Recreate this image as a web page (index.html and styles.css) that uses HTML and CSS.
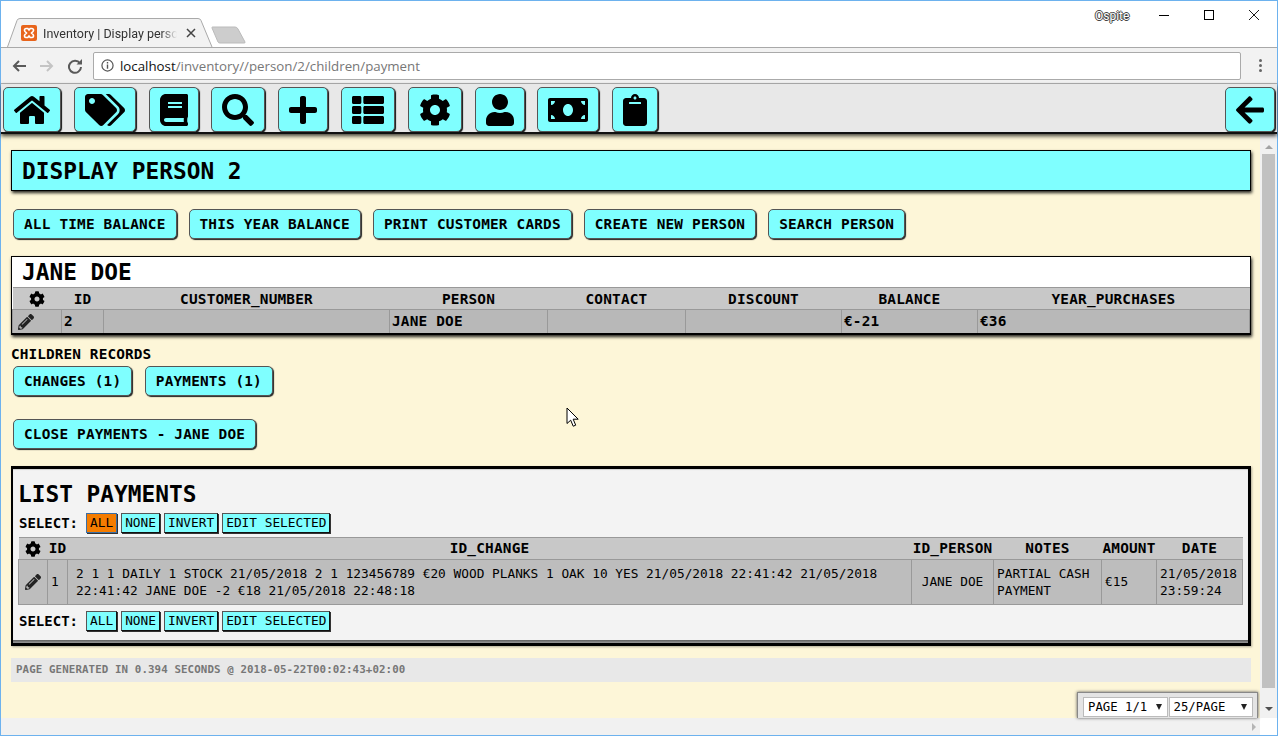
FILE: index.html
```html
<!DOCTYPE html>
<html lang="en">
<head>
    <meta charset="UTF-8">
    <title>Inventory | Display person 2</title>
    <link rel="stylesheet" href="styles.css">
</head>
<body>
    <svg class="sprite" xmlns="http://www.w3.org/2000/svg">
        <symbol id="i-home" viewBox="0 0 576 512"><path d="M280.37 148.26L96 300.11V464a16 16 0 0 0 16 16l112.06-.29a16 16 0 0 0 15.92-16V368a16 16 0 0 1 16-16h64a16 16 0 0 1 16 16v95.64a16 16 0 0 0 16 16.05L464 480a16 16 0 0 0 16-16V300L295.67 148.26a12.19 12.19 0 0 0-15.3 0zM571.6 251.47L488 182.56V44.05a12 12 0 0 0-12-12h-56a12 12 0 0 0-12 12v72.61L318.47 43a48 48 0 0 0-61 0L4.34 251.47a12 12 0 0 0-1.6 16.9l25.5 31A12 12 0 0 0 45.15 301l235.22-193.74a12.19 12.19 0 0 1 15.3 0L530.9 301a12 12 0 0 0 16.9-1.6l25.5-31a12 12 0 0 0-1.7-16.93z"/></symbol>
        <symbol id="i-tags" viewBox="0 0 640 512"><path d="M497.941 225.941L286.059 14.059A48 48 0 0 0 252.118 0H48C21.49 0 0 21.49 0 48v204.118a48 48 0 0 0 14.059 33.941l211.882 211.882c18.744 18.745 49.136 18.746 67.882 0l204.118-204.118c18.745-18.745 18.745-49.137 0-67.882zM112 160c-26.51 0-48-21.49-48-48s21.49-48 48-48 48 21.49 48 48-21.49 48-48 48zm513.941 133.823L421.823 497.941c-18.745 18.745-49.137 18.745-67.882 0l-.36-.36L527.64 323.522c16.999-16.999 26.36-39.6 26.36-63.64s-9.362-46.641-26.36-63.64L331.397 0h48.721a48 48 0 0 1 33.941 14.059l211.882 211.882c18.745 18.745 18.745 49.137 0 67.882z"/></symbol>
        <symbol id="i-book" viewBox="0 0 448 512"><path d="M448 360V24c0-13.3-10.7-24-24-24H96C43 0 0 43 0 96v320c0 53 43 96 96 96h328c13.3 0 24-10.7 24-24v-16c0-7.5-3.5-14.3-8.9-18.7-4.2-15.4-4.2-59.3 0-74.7 5.4-4.3 8.9-11.1 8.9-18.6zM128 134c0-3.3 2.7-6 6-6h212c3.3 0 6 2.7 6 6v20c0 3.3-2.7 6-6 6H134c-3.3 0-6-2.7-6-6v-20zm0 64c0-3.3 2.7-6 6-6h212c3.3 0 6 2.7 6 6v20c0 3.3-2.7 6-6 6H134c-3.3 0-6-2.7-6-6v-20zm253.4 250H96c-17.7 0-32-14.3-32-32 0-17.6 14.4-32 32-32h285.4c-1.9 17.1-1.9 46.9 0 64z"/></symbol>
        <symbol id="i-search" viewBox="0 0 512 512"><path d="M505 442.7L405.3 343c-4.5-4.5-10.6-7-17-7H372c27.6-35.3 44-79.7 44-128C416 93.1 322.9 0 208 0S0 93.1 0 208s93.1 208 208 208c48.3 0 92.7-16.4 128-44v16.3c0 6.4 2.5 12.5 7 17l99.7 99.7c9.4 9.4 24.6 9.4 33.9 0l28.3-28.3c9.4-9.4 9.4-24.6.1-34zM208 336c-70.7 0-128-57.2-128-128 0-70.7 57.2-128 128-128 70.7 0 128 57.2 128 128 0 70.7-57.2 128-128 128z"/></symbol>
        <symbol id="i-plus" viewBox="0 0 448 512"><path d="M416 208H272V64c0-17.67-14.33-32-32-32h-32c-17.67 0-32 14.33-32 32v144H32c-17.67 0-32 14.33-32 32v32c0 17.67 14.33 32 32 32h144v144c0 17.67 14.33 32 32 32h32c17.67 0 32-14.33 32-32V304h144c17.67 0 32-14.33 32-32v-32c0-17.67-14.33-32-32-32z"/></symbol>
        <symbol id="i-list" viewBox="0 0 512 512"><path d="M149.333 216v80c0 13.255-10.745 24-24 24H24c-13.255 0-24-10.745-24-24v-80c0-13.255 10.745-24 24-24h101.333c13.255 0 24 10.745 24 24zM0 376v80c0 13.255 10.745 24 24 24h101.333c13.255 0 24-10.745 24-24v-80c0-13.255-10.745-24-24-24H24c-13.255 0-24 10.745-24 24zM125.333 32H24C10.745 32 0 42.745 0 56v80c0 13.255 10.745 24 24 24h101.333c13.255 0 24-10.745 24-24V56c0-13.255-10.745-24-24-24zm80 448H488c13.255 0 24-10.745 24-24v-80c0-13.255-10.745-24-24-24H205.333c-13.255 0-24 10.745-24 24v80c0 13.255 10.745 24 24 24zm-24-424v80c0 13.255 10.745 24 24 24H488c13.255 0 24-10.745 24-24V56c0-13.255-10.745-24-24-24H205.333c-13.255 0-24 10.745-24 24zm24 264H488c13.255 0 24-10.745 24-24v-80c0-13.255-10.745-24-24-24H205.333c-13.255 0-24 10.745-24 24v80c0 13.255 10.745 24 24 24z"/></symbol>
        <symbol id="i-cog" viewBox="0 0 512 512"><path d="M487.4 315.7l-42.6-24.6c4.3-23.2 4.3-47 0-70.2l42.6-24.6c4.9-2.8 7.1-8.6 5.5-14-11.1-35.6-30-67.8-54.7-94.6-3.8-4.1-10-5.1-14.8-2.3L380.8 110c-17.9-15.4-38.5-27.3-60.8-35.1V25.8c0-5.6-3.9-10.5-9.4-11.7-36.7-8.2-74.3-7.8-109.2 0-5.5 1.2-9.4 6.1-9.4 11.7V75c-22.2 7.9-42.8 19.8-60.8 35.1L88.7 85.5c-4.9-2.8-11-1.9-14.8 2.3-24.7 26.7-43.6 58.9-54.7 94.6-1.7 5.4.6 11.2 5.5 14L67.3 221c-4.3 23.2-4.3 47 0 70.2l-42.6 24.6c-4.9 2.8-7.1 8.6-5.5 14 11.1 35.6 30 67.8 54.7 94.6 3.8 4.1 10 5.1 14.8 2.3l42.6-24.6c17.9 15.4 38.5 27.3 60.8 35.1v49.2c0 5.6 3.9 10.5 9.4 11.7 36.7 8.2 74.3 7.8 109.2 0 5.5-1.2 9.4-6.1 9.4-11.7v-49.2c22.2-7.9 42.8-19.8 60.8-35.1l42.6 24.6c4.9 2.8 11 1.9 14.8-2.3 24.7-26.7 43.6-58.9 54.7-94.6 1.5-5.5-.7-11.3-5.6-14.1zM256 336c-44.1 0-80-35.9-80-80s35.9-80 80-80 80 35.9 80 80-35.9 80-80 80z"/></symbol>
        <symbol id="i-user" viewBox="0 0 448 512"><path d="M224 256c70.7 0 128-57.3 128-128S294.7 0 224 0 96 57.3 96 128s57.3 128 128 128zm89.6 32h-16.7c-22.2 10.2-46.9 16-72.9 16s-50.6-5.8-72.9-16h-16.7C60.2 288 0 348.2 0 422.4V464c0 26.5 21.5 48 48 48h352c26.5 0 48-21.5 48-48v-41.6c0-74.2-60.2-134.4-134.4-134.4z"/></symbol>
        <symbol id="i-money" viewBox="0 0 640 512"><path d="M608 64H32C14.33 64 0 78.33 0 96v320c0 17.67 14.33 32 32 32h576c17.67 0 32-14.33 32-32V96c0-17.67-14.33-32-32-32zM48 400v-64c35.35 0 64 28.65 64 64H48zm0-224v-64h64c0 35.35-28.65 64-64 64zm272 176c-44.19 0-80-42.99-80-96 0-53.02 35.82-96 80-96s80 42.98 80 96c0 53.03-35.83 96-80 96zm272 48h-64c0-35.35 28.65-64 64-64v64zm0-224c-35.35 0-64-28.65-64-64h64v64z"/></symbol>
        <symbol id="i-clip" viewBox="0 0 384 512"><path d="M384 112v352c0 26.51-21.49 48-48 48H48c-26.51 0-48-21.49-48-48V112c0-26.51 21.49-48 48-48h80c0-35.29 28.71-64 64-64s64 28.71 64 64h80c26.51 0 48 21.49 48 48zM192 40c-13.255 0-24 10.745-24 24s10.745 24 24 24 24-10.745 24-24-10.745-24-24-24m96 114v-20a6 6 0 0 0-6-6H102a6 6 0 0 0-6 6v20a6 6 0 0 0 6 6h180a6 6 0 0 0 6-6z"/></symbol>
        <symbol id="i-back" viewBox="0 0 448 512"><path d="M257.5 445.1l-22.2 22.2c-9.4 9.4-24.6 9.4-33.9 0L7 273c-9.4-9.4-9.4-24.6 0-33.9L201.4 44.7c9.4-9.4 24.6-9.4 33.9 0l22.2 22.2c9.5 9.5 9.3 25-.4 34.3L136.6 216H424c13.3 0 24 10.7 24 24v32c0 13.3-10.7 24-24 24H136.6l120.5 114.8c9.8 9.3 10 24.8.4 34.3z"/></symbol>
        <symbol id="i-pencil" viewBox="0 0 512 512"><path d="M497.9 142.1l-46.1 46.1c-4.7 4.7-12.3 4.7-17 0l-111-111c-4.7-4.7-4.7-12.3 0-17l46.1-46.1c18.7-18.7 49.1-18.7 67.9 0l60.1 60.1c18.8 18.7 18.8 49.1 0 67.9zM284.2 99.8L21.6 362.4.4 483.9c-2.9 16.4 11.4 30.6 27.8 27.8l121.5-21.3 262.6-262.6c4.7-4.7 4.7-12.3 0-17l-111-111c-4.8-4.7-12.4-4.7-17.1 0zM124.1 339.9c-5.5-5.5-5.5-14.3 0-19.8l154-154c5.5-5.5 14.3-5.5 19.8 0s5.5 14.3 0 19.8l-154 154c-5.5 5.5-14.3 5.5-19.8 0zM88 424h48v36.3l-64.5 11.3-31.1-31.1L51.7 376H88v48z"/></symbol>
    </svg>

    <div class="window">
        <div class="titlebar">
            <div class="tab">
                <svg class="tab-shape" viewBox="0 0 208 29"><path d="M0.5 29 L10 2.5 Q10.7 0.5 13 0.5 H191 Q193.3 0.5 194 2.5 L205 29" fill="#f2f2f2" stroke="#a9a9a9"/></svg>
                <svg class="favicon" viewBox="0 0 16 16"><rect width="16" height="16" rx="2" fill="#e8641b"/><path d="M5 3.5h1.800L8 5l1.200-1.500H11c1.500 0 2 1.800 1 3L10.500 8l1.500 1.500c1 1.200.5 3-1 3H9.200L8 11l-1.200 1.500H5c-1.500 0-2-1.800-1-3L5.500 8 4 6.500c-1-1.200-.5-3 1-3z" fill="none" stroke="#fff" stroke-width="1.600"/></svg>
                <span class="tab-title">Inventory | Display person</span>
                <svg class="tab-close" viewBox="0 0 10 10"><path d="M1 1l8 8M9 1l-8 8" stroke="#444" stroke-width="1.5"/></svg>
            </div>
            <svg class="newtab" viewBox="0 0 35 18"><path d="M1.5 1 H24 Q26 1 27 3 L34 16 Q34.5 17 33 17 H9 Q7.500 17 7 16 L1 2 Q0.700 1 1.500 1z" fill="#cdcdcd" stroke="#bbb"/></svg>
            <span class="user-name">Ospite</span>
            <div class="win-controls">
                <svg class="win-btn" viewBox="0 0 10 10"><path d="M0 5.5h10" stroke="#000"/></svg>
                <svg class="win-btn" viewBox="0 0 10 10"><rect x="0.5" y="0.5" width="9" height="9" fill="none" stroke="#000"/></svg>
                <svg class="win-btn" viewBox="0 0 10 10"><path d="M0 0l10 10M10 0L0 10" stroke="#000" stroke-width="0.9"/></svg>
            </div>
        </div>

        <div class="toolbar">
            <svg class="tool-icon" viewBox="0 0 16 16"><path d="M15 8H3M8 3L3 8l5 5" fill="none" stroke="#5a5a5a" stroke-width="2"/></svg>
            <svg class="tool-icon" viewBox="0 0 16 16"><path d="M1 8h12M8 3l5 5-5 5" fill="none" stroke="#c4c4c4" stroke-width="2"/></svg>
            <svg class="tool-icon" viewBox="0 0 16 16"><path d="M13 5.500A6 6 0 1 0 14 9" fill="none" stroke="#5a5a5a" stroke-width="2"/><path d="M9.500 6.500H15V1z" fill="#5a5a5a"/></svg>
            <div class="address">
                <svg class="info" viewBox="0 0 14 14"><circle cx="7" cy="7" r="6" fill="none" stroke="#555" stroke-width="1.300"/><path d="M7 6v4.500M7 3.300v1.500" stroke="#555" stroke-width="1.500"/></svg>
                <span class="url"><span class="host">localhost</span>/inventory//person/2/children/payment</span>
            </div>
            <span class="kebab"><i></i><i></i><i></i></span>
        </div>

        <nav class="navbar">
            <a class="nav-btn"><svg class="w36"><use href="#i-home"/></svg></a>
            <a class="nav-btn"><svg class="w40"><use href="#i-tags"/></svg></a>
            <a class="nav-btn"><svg class="w28"><use href="#i-book"/></svg></a>
            <a class="nav-btn"><svg class="w32"><use href="#i-search"/></svg></a>
            <a class="nav-btn"><svg class="w28"><use href="#i-plus"/></svg></a>
            <a class="nav-btn"><svg class="w32"><use href="#i-list"/></svg></a>
            <a class="nav-btn"><svg class="w32"><use href="#i-cog"/></svg></a>
            <a class="nav-btn"><svg class="w28"><use href="#i-user"/></svg></a>
            <a class="nav-btn"><svg class="w40"><use href="#i-money"/></svg></a>
            <a class="nav-btn"><svg class="w24"><use href="#i-clip"/></svg></a>
            <a class="nav-btn nav-back"><svg class="w28"><use href="#i-back"/></svg></a>
        </nav>

        <div class="viewport">
            <main class="content">
                <h1 class="page-title">DISPLAY PERSON 2</h1>

                <div class="btn-row">
                    <a class="btn">ALL TIME BALANCE</a>
                    <a class="btn">THIS YEAR BALANCE</a>
                    <a class="btn">PRINT CUSTOMER CARDS</a>
                    <a class="btn">CREATE NEW PERSON</a>
                    <a class="btn">SEARCH PERSON</a>
                </div>

                <section class="record">
                    <h2 class="record-name">JANE DOE</h2>
                    <table class="grid grid-person">
                        <colgroup>
                            <col class="p1"><col class="p2"><col class="p3"><col class="p4"><col class="p5"><col class="p6"><col class="p7"><col>
                        </colgroup>
                        <thead>
                            <tr>
                                <th><svg class="cell-icon"><use href="#i-cog"/></svg></th>
                                <th>ID</th><th>CUSTOMER_NUMBER</th><th>PERSON</th><th>CONTACT</th><th>DISCOUNT</th><th>BALANCE</th><th>YEAR_PURCHASES</th>
                            </tr>
                        </thead>
                        <tbody>
                            <tr>
                                <td class="edit-cell"><svg class="cell-icon pencil"><use href="#i-pencil"/></svg></td>
                                <td>2</td><td></td><td>JANE DOE</td><td></td><td></td><td>€-21</td><td>€36</td>
                            </tr>
                        </tbody>
                    </table>
                </section>

                <div class="children-label">CHILDREN RECORDS</div>
                <div class="btn-row btn-row-children">
                    <a class="btn">CHANGES (1)</a>
                    <a class="btn">PAYMENTS (1)</a>
                </div>
                <div class="btn-row">
                    <a class="btn">CLOSE PAYMENTS - JANE DOE</a>
                </div>

                <section class="list-box">
                    <div class="list-inner">
                        <h2 class="list-title">LIST PAYMENTS</h2>
                        <div class="select-row">
                            <b>SELECT:</b>
                            <a class="mini active">ALL</a><a class="mini">NONE</a><a class="mini">INVERT</a><a class="mini">EDIT SELECTED</a>
                        </div>
                        <table class="grid grid-list">
                            <colgroup>
                                <col class="l1"><col class="l2"><col><col class="l4"><col class="l5"><col class="l6"><col class="l7">
                            </colgroup>
                            <thead>
                                <tr>
                                    <th><svg class="cell-icon"><use href="#i-cog"/></svg></th>
                                    <th>ID</th><th>ID_CHANGE</th><th>ID_PERSON</th><th>NOTES</th><th>AMOUNT</th><th>DATE</th>
                                </tr>
                            </thead>
                            <tbody>
                                <tr>
                                    <td class="center"><svg class="cell-icon pencil"><use href="#i-pencil"/></svg></td>
                                    <td>1</td>
                                    <td class="pad">2 1 1 DAILY 1 STOCK 21/05/2018 2 1 123456789 €20 WOOD PLANKS 1 OAK 10 YES 21/05/2018 22:41:42 21/05/2018 22:41:42 JANE DOE -2 €18 21/05/2018 22:48:18</td>
                                    <td class="center">JANE DOE</td>
                                    <td>PARTIAL CASH PAYMENT</td>
                                    <td>€15</td>
                                    <td>21/05/2018 23:59:24</td>
                                </tr>
                            </tbody>
                        </table>
                        <div class="select-row select-row-bottom">
                            <b>SELECT:</b>
                            <a class="mini">ALL</a><a class="mini">NONE</a><a class="mini">INVERT</a><a class="mini">EDIT SELECTED</a>
                        </div>
                    </div>
                </section>

                <footer class="page-footer">PAGE GENERATED IN 0.394 SECONDS @ 2018-05-22T00:02:43+02:00</footer>
            </main>

            <div class="pager">
                <span class="pager-box">PAGE 1/1<i class="caret"></i></span>
                <span class="pager-box">25/PAGE<i class="caret"></i></span>
            </div>

            <svg class="cursor" viewBox="0 0 14 21"><path d="M1 1v15.500l3.700-3.300 2.500 6 2.500-1-2.500-6h5z" fill="#fff" stroke="#000"/></svg>

            <div class="vscroll">
                <span class="arrow-up"></span>
                <div class="thumb"></div>
                <span class="arrow-down"></span>
            </div>
        </div>

        <div class="hscroll">
            <div class="htrack"><span class="arrow-right"></span></div>
            <div class="corner"></div>
        </div>
    </div>
</body>
</html>
```

FILE: styles.css
```css
* {
    box-sizing: border-box;
}

html, body {
    margin: 0;
    height: 736px;
    overflow: hidden;
}

body {
    font-family: "DejaVu Sans Mono", "Liberation Mono", monospace;
    font-size: 14.4px;
    color: #000;
    background: #fff;
}

.sprite {
    position: absolute;
    width: 0;
    height: 0;
}

.window {
    height: 736px;
    display: flex;
    flex-direction: column;
    border: 1px solid #6db2ee;
}

/* browser chrome */
.titlebar {
    height: 46px;
    flex: none;
    display: flex;
    align-items: flex-end;
    background: #fff;
    position: relative;
}

.tab {
    width: 205px;
    height: 29px;
    margin-left: 6px;
    padding: 1px 16px 0 14px;
    display: flex;
    align-items: center;
    gap: 6px;
    position: relative;
    font-family: Roboto, sans-serif;
    font-size: 12.5px;
    color: #333;
}

.tab-shape {
    position: absolute;
    left: 0;
    top: 0;
    width: 208px;
    height: 29px;
}

.favicon {
    width: 16px;
    height: 16px;
    position: relative;
    flex: none;
}

.tab-title {
    width: 134px;
    flex: none;
    white-space: nowrap;
    position: relative;
    -webkit-mask-image: linear-gradient(to right, #000 88%, transparent);
    mask-image: linear-gradient(to right, #000 88%, transparent);
}

.tab-close {
    width: 10px;
    height: 10px;
    margin-left: auto;
    position: relative;
    flex: none;
}

.newtab {
    width: 35px;
    height: 18px;
    margin: 0 0 3px -1px;
    flex: none;
}

.user-name {
    position: absolute;
    left: 1094px;
    top: 8px;
    font-family: Roboto, sans-serif;
    font-size: 12px;
    color: #fff;
    text-shadow: 1px 0 0 #444, -1px 0 0 #444, 0 1px 0 #444, 0 -1px 0 #444;
}

.win-controls {
    position: absolute;
    right: 18px;
    top: 9px;
    display: flex;
    gap: 35px;
}

.win-btn {
    width: 10px;
    height: 10px;
}

.toolbar {
    height: 37px;
    flex: none;
    display: flex;
    align-items: center;
    background: #f2f2f2;
    border-top: 1px solid #a9a9a9;
    border-bottom: 1px solid #b5b5b5;
    padding-left: 10px;
}

.tool-icon {
    width: 16px;
    height: 16px;
    margin-right: 12px;
    flex: none;
}

.address {
    width: 1148px;
    height: 28px;
    margin-left: -2px;
    padding-left: 7px;
    display: flex;
    align-items: center;
    gap: 6px;
    background: #fff;
    border: 1px solid #aaa;
    border-radius: 2px;
}

.info {
    width: 13px;
    height: 13px;
}

.url {
    font-family: "Open Sans", sans-serif;
    font-size: 13.3px;
    color: #777;
}

.host {
    color: #111;
}

.kebab {
    margin-left: 18px;
    display: flex;
    flex-direction: column;
    gap: 2px;
}

.kebab i {
    width: 3px;
    height: 3px;
    background: #666;
    border-radius: 50%;
}

/* icon bar */
.navbar {
    height: 50px;
    flex: none;
    display: flex;
    gap: 12.8px;
    padding: 3px 2px 0;
    background: #e8e8e8;
    border-bottom: 2px solid #111;
    box-shadow: 0 2px 4px rgba(0, 0, 0, 0.75);
    position: relative;
    z-index: 2;
}

.nav-btn {
    height: 45px;
    padding: 0 10px;
    display: flex;
    align-items: center;
    background: #7fffff;
    border: 1px solid #555;
    border-radius: 5px;
    box-shadow: 1px 1px 1px #111;
}

.nav-back {
    margin-left: auto;
}

.nav-btn svg {
    height: 32px;
}

.w24 { width: 24px; }
.w28 { width: 28px; }
.w32 { width: 32px; }
.w36 { width: 36px; }
.w40 { width: 40px; }

/* page */
.viewport {
    flex: 1;
    min-height: 0;
    display: flex;
    position: relative;
    background: #fdf6d8;
}

.content {
    flex: 1;
    min-width: 0;
    padding: 16px 9px 0 10px;
}

.page-title {
    margin: 0 0 18px;
    height: 41px;
    line-height: 41px;
    padding-left: 10px;
    font-size: 22.8px;
    font-weight: bold;
    background: #7fffff;
    border: 1px solid #000;
    box-shadow: 1px 2px 3px rgba(0, 0, 0, 0.85);
}

.btn-row {
    display: flex;
    gap: 12px;
    padding-left: 2px;
    margin-bottom: 17px;
}

.btn {
    height: 30px;
    line-height: 28px;
    padding: 0 10px;
    font-weight: bold;
    letter-spacing: 0.18px;
    background: #7fffff;
    border: 1px solid #555;
    border-radius: 5px;
    box-shadow: 1px 1px 1px #222;
    white-space: nowrap;
}

.record {
    border: 1px solid #000;
    border-bottom-width: 2px;
    background: #fff;
    box-shadow: 1px 2px 3px rgba(0, 0, 0, 0.85);
}

.record-name {
    margin: 0;
    height: 30px;
    line-height: 30px;
    padding-left: 10px;
    font-size: 22.8px;
}

.grid {
    width: 100%;
    table-layout: fixed;
    border-collapse: collapse;
}

.grid th {
    height: 22px;
    padding: 0;
    font-size: 14.4px;
    letter-spacing: 0.19px;
    background: #c8c8c8;
    border: 1px solid #999;
    border-left: none;
    border-right: none;
}

.grid td {
    padding: 0 2px;
    background: #b8b8b8;
    border: 1px solid #999;
}

.grid-person td {
    height: 23px;
    font-weight: bold;
    letter-spacing: 0.19px;
    border-bottom: none;
}

.grid-person td.edit-cell {
    padding-left: 5px;
}

.grid-list td {
    font-size: 12.8px;
    line-height: 17px;
    height: 45px;
    padding: 0 3px;
    background: #bdbdbd;
}

.grid td.center {
    text-align: center;
}

.grid td.pad {
    padding: 0 8px;
}

.cell-icon {
    width: 16px;
    height: 16px;
    vertical-align: middle;
}

.pencil {
    fill: #222;
}

.p1 { width: 49px; }
.p2 { width: 42px; }
.p3 { width: 286px; }
.p4 { width: 158px; }
.p5 { width: 138px; }
.p6 { width: 156px; }
.p7 { width: 136px; }

.l1 { width: 29px; }
.l2 { width: 20px; }
.l4 { width: 82px; }
.l5 { width: 108px; }
.l6 { width: 55px; }
.l7 { width: 86px; }

.children-label {
    margin-top: 10px;
    height: 21px;
    line-height: 18px;
    font-size: 14.4px;
    letter-spacing: 0.1px;
    font-weight: bold;
}

.btn-row-children {
    gap: 12.5px;
    margin-bottom: 23px;
}

.list-box {
    height: 180px;
    border: 2px solid #000;
    border-right-width: 3px;
    border-bottom-width: 3px;
    padding: 1px 0 3px;
    background: linear-gradient(to bottom, #000 90%, #333 97%, #999);
    box-shadow: 1px 1px 2px rgba(0, 0, 0, 0.3);
}

.list-inner {
    height: 100%;
    padding: 0 5px;
    background: #f3f3f3;
    box-shadow: inset 0 1px 1px #d0d0d0;
}

.list-title {
    margin: 0;
    height: 42px;
    padding: 8px 0 0;
    line-height: 34px;
    font-size: 22.8px;
}

.select-row {
    display: flex;
    align-items: center;
    height: 20px;
    font-size: 12.8px;
    margin-top: 2px;
    margin-bottom: 4px;
}

.select-row b {
    width: 68px;
    padding-left: 1px;
    font-size: 14px;
}

.select-row-bottom {
    margin-top: 6px;
}

.mini {
    height: 20px;
    line-height: 18px;
    padding: 0 3px;
    margin-right: 4px;
    font-size: 12.8px;
    background: #7fffff;
    border: 1px solid #555;
    border-right-color: #111;
    border-bottom-color: #111;
    box-shadow: 1px 1px 0 #333;
}

.mini.active {
    background: #f47c00;
    border-color: #3a6ea5;
}

.page-footer {
    margin-top: 12px;
    height: 24px;
    line-height: 24px;
    padding-left: 5px;
    font-size: 10.8px;
    letter-spacing: 0.1px;
    font-weight: bold;
    color: #777;
    background: #e8e8e8;
}

/* things lying over the page */
.pager {
    position: absolute;
    right: 19px;
    bottom: 0;
    width: 181px;
    height: 26px;
    padding: 4px 4px 0 5px;
    display: flex;
    gap: 1px;
    background: #e4e4e4;
    border: 1px solid #888;
    border-bottom: none;
    box-shadow: 0 0 3px #555;
    font-size: 12.3px;
}

.pager-box {
    width: 85px;
    height: 20px;
    line-height: 19px;
    padding: 0 5px 0 4px;
    display: flex;
    justify-content: space-between;
    align-items: center;
    background: #fff;
    border: 1px solid #bbb;
}

.caret {
    border: 3px solid transparent;
    border-top: 6px solid #222;
    border-bottom: none;
}

.cursor {
    position: absolute;
    left: 565px;
    top: 273px;
    width: 14px;
    height: 21px;
}

.vscroll {
    width: 17px;
    flex: none;
    padding: 0 2px;
    display: flex;
    flex-direction: column;
    align-items: center;
    background: #f1f1f1;
    position: relative;
    z-index: 1;
}

.arrow-up {
    margin: 11px 0 5px;
    border: 4px solid transparent;
    border-top: none;
    border-bottom: 4px solid #a3a3a3;
}

.thumb {
    width: 13px;
    flex: 1;
    background: #c1c1c1;
}

.arrow-down {
    margin: 19px 0 7px;
    border: 4px solid transparent;
    border-bottom: none;
    border-top: 4px solid #505050;
}

.hscroll {
    height: 17px;
    flex: none;
    display: flex;
}

.htrack {
    flex: 1;
    display: flex;
    justify-content: flex-end;
    align-items: center;
    padding-right: 4px;
    background: #f1f1f1;
}

.arrow-right {
    border: 4px solid transparent;
    border-right: none;
    border-left: 4px solid #b5b5b5;
}

.corner {
    width: 17px;
    background: #fff;
}
```
